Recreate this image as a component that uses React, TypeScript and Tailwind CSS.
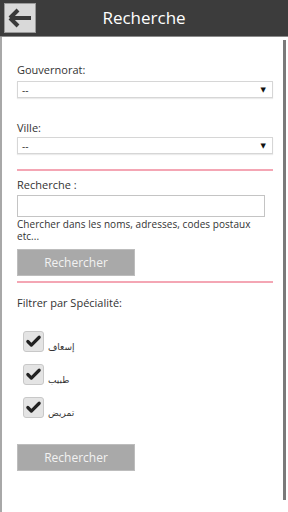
import { Check } from 'lucide-react';

const font = { fontFamily: '"Open Sans", "DejaVu Sans", sans-serif' };

function Select() {
  return (
    <div className="flex h-[17px] items-center justify-between border border-[#d6d6d6] bg-white pl-[4px] pr-[6px] shadow-[0_1px_1px_rgba(0,0,0,0.08)]">
      <span className="text-[10px] leading-none text-[#333]">--</span>
      <span className="text-[7px] leading-none text-[#111]">▼</span>
    </div>
  );
}

function GrayButton() {
  return (
    <button className="flex h-[27px] w-[118px] items-center justify-center border border-[#bdbdbd] bg-[#a9a9a9] text-[12px] text-[#f2f2f2]">
      Rechercher
    </button>
  );
}

function CheckRow({ label }: { label: string }) {
  return (
    <div className="flex items-end gap-[4px] pl-[6px]">
      <div className="flex h-[21px] w-[21px] items-center justify-center rounded-[3px] border border-[#c8c8c8] bg-[#e4e4e4]">
        <Check size={17} strokeWidth={4.5} color="#222" />
      </div>
      <span
        className="mb-[-2px] text-[9px] text-[#333]"
        style={{ fontFamily: '"DejaVu Sans", sans-serif' }}
      >
        {label}
      </span>
    </div>
  );
}

export default function App() {
  return (
    <div className="flex h-[512px] w-[288px] flex-col overflow-hidden bg-white" style={font}>
      {/* barre du haut */}
      <div className="grid h-[37px] shrink-0 grid-cols-[40px_1fr_40px] items-center border-b border-[#8a8a8a] bg-[#3c3c3c]">
        <div className="ml-[4px] flex h-[30px] w-[32px] items-center justify-center border border-[#9a9a9a] bg-[#d9d9d9]">
          <svg width="26" height="20" viewBox="0 0 26 20">
            <path d="M3 10 L11 2 M3 10 L11 18 M3 10 H24" stroke="#3a3a3a" strokeWidth="4" fill="none" />
          </svg>
        </div>
        <div className="text-center text-[17px] text-white">Recherche</div>
        <div />
      </div>

      <div className="flex min-h-0 flex-1">
        <div className="w-[2px] shrink-0 bg-[#a8a8a8]" />
        <div className="flex flex-1 flex-col pl-[15px] pr-[10px] pt-[26px]">
          <div className="text-[11px] leading-[14px] text-[#333]">Gouvernorat:</div>
          <div className="mt-[4px]">
            <Select />
          </div>

          <div className="mt-[23px] text-[11px] leading-[14px] text-[#333]">Ville:</div>
          <div className="mt-[2px]">
            <Select />
          </div>

          <div className="mt-[15px] h-[2px] bg-[#f4a6b4]" />

          <div className="mt-[7px] text-[11px] leading-[14px] text-[#333]">Recherche :</div>
          <div className="mt-[3px] mr-[8px] h-[22px] border border-[#c4c4c4] bg-white" />
          <div className="mt-[1px] text-[10px] leading-[12px] tracking-[0.05px] text-[#333]">
            Chercher dans les noms, adresses, codes postaux etc...
          </div>
          <div className="mt-[7px]">
            <GrayButton />
          </div>

          <div className="mt-[5px] h-[2px] bg-[#f4a6b4]" />

          <div className="mt-[13px] text-[11px] leading-[14px] text-[#333]">Filtrer par Spécialité:</div>

          <div className="mt-[21px] flex flex-col gap-[12px]">
            <CheckRow label="إسعاف" />
            <CheckRow label="طبيب" />
            <CheckRow label="تمريض" />
          </div>

          <div className="mt-[26px]">
            <GrayButton />
          </div>
        </div>
        <div className="flex w-[5px] shrink-0 flex-col">
          <div className="mt-[3px] h-[460px] w-[3px] bg-[#7a7a7a]" />
        </div>
      </div>
    </div>
  );
}
